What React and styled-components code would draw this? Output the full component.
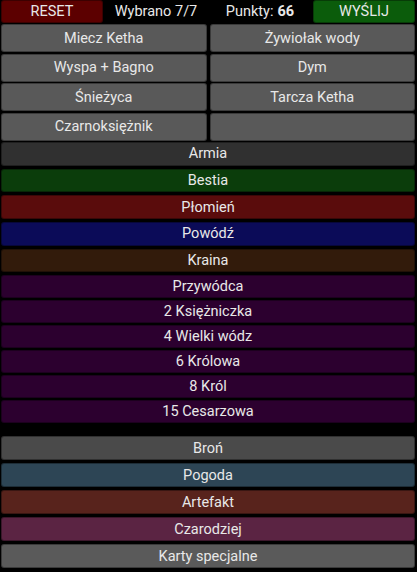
import React from 'react';
import styled, { createGlobalStyle } from 'styled-components';

const Global = createGlobalStyle`
    body {
        margin: 0;
        background: #000;
        font-family: Roboto, 'Noto Sans', sans-serif;
    }
`;

const Page = styled.div`
    width: 417px;
    height: 572px;
    overflow: hidden;
    background: #000;
    display: flex;
    flex-direction: column;
`;

const TopBar = styled.div`
    display: grid;
    grid-template-columns: repeat(4, 1fr);
    column-gap: 2px;
    height: 23px;
    flex-shrink: 0;
    padding: 0 2px 0 1px;
`;

const Status = styled.div`
    display: flex;
    align-items: center;
    justify-content: center;
    color: #e8e8e8;
    font-size: 14.5px;

    & b {
        margin-left: 4px;
        font-weight: 700;
    }
`;

const Button = styled.div`
    box-sizing: border-box;
    display: flex;
    align-items: center;
    justify-content: center;
    height: ${(props) => props.$h || 23.5}px;
    flex-shrink: 0;
    background: ${(props) => props.$bg};
    border: 1px solid rgba(0, 0, 0, 0.35);
    border-radius: 3px;
    color: #e8e8e8;
    font-size: 14.5px;
    white-space: nowrap;
`;

const CardGrid = styled.div`
    display: grid;
    grid-template-columns: 1fr 1fr;
    gap: 1.5px 3px;
    padding: 0 2px 0 1px;
    margin-top: 1px;
    flex-shrink: 0;
`;

const Stack = styled.div`
    display: flex;
    flex-direction: column;
    flex-shrink: 0;
    gap: ${(props) => props.$gap}px;
    padding: 0 2px 0 1px;
    margin-top: ${(props) => props.$top}px;
`;

const cards = [
    'Miecz Ketha',
    'Żywiołak wody',
    'Wyspa + Bagno',
    'Dym',
    'Śnieżyca',
    'Tarcza Ketha',
    'Czarnoksiężnik',
    '',
];

const suits = [
    ['Armia', '#303030'],
    ['Bestia', '#0b3d0b'],
    ['Płomień', '#5a0c0c'],
    ['Powódź', '#0b0b58'],
    ['Kraina', '#321b0b'],
];

const leaders = [
    'Przywódca',
    '2 Księżniczka',
    '4 Wielki wódz',
    '6 Królowa',
    '8 Król',
    '15 Cesarzowa',
];

const others = [
    ['Broń', '#4a4a4a'],
    ['Pogoda', '#2d4555'],
    ['Artefakt', '#58231c'],
    ['Czarodziej', '#5b2443'],
    ['Karty specjalne', '#5a5a5a'],
];

export default () => {
    return (
        <Page>
            <Global />
            <TopBar>
                <Button $bg="#5c0000" $h={23}>RESET</Button>
                <Status>Wybrano 7/7</Status>
                <Status>
                    Punkty:<b>66</b>
                </Status>
                <Button $bg="#0b5c0b" $h={23}>WYŚLIJ</Button>
            </TopBar>
            <CardGrid>
                {cards.map((name, i) => (
                    <Button key={i} $bg="#595959" $h={28}>
                        {name}
                    </Button>
                ))}
            </CardGrid>
            <Stack $gap={3.2} $top={1.5}>
                {suits.map(([name, bg]) => (
                    <Button key={name} $bg={bg}>
                        {name}
                    </Button>
                ))}
            </Stack>
            <Stack $gap={2} $top={3.2}>
                {leaders.map((name) => (
                    <Button key={name} $bg="#2c002f" $h={23}>
                        {name}
                    </Button>
                ))}
            </Stack>
            <Stack $gap={3.5} $top={13}>
                {others.map(([name, bg]) => (
                    <Button key={name} $bg={bg}>
                        {name}
                    </Button>
                ))}
            </Stack>
        </Page>
    );
};
